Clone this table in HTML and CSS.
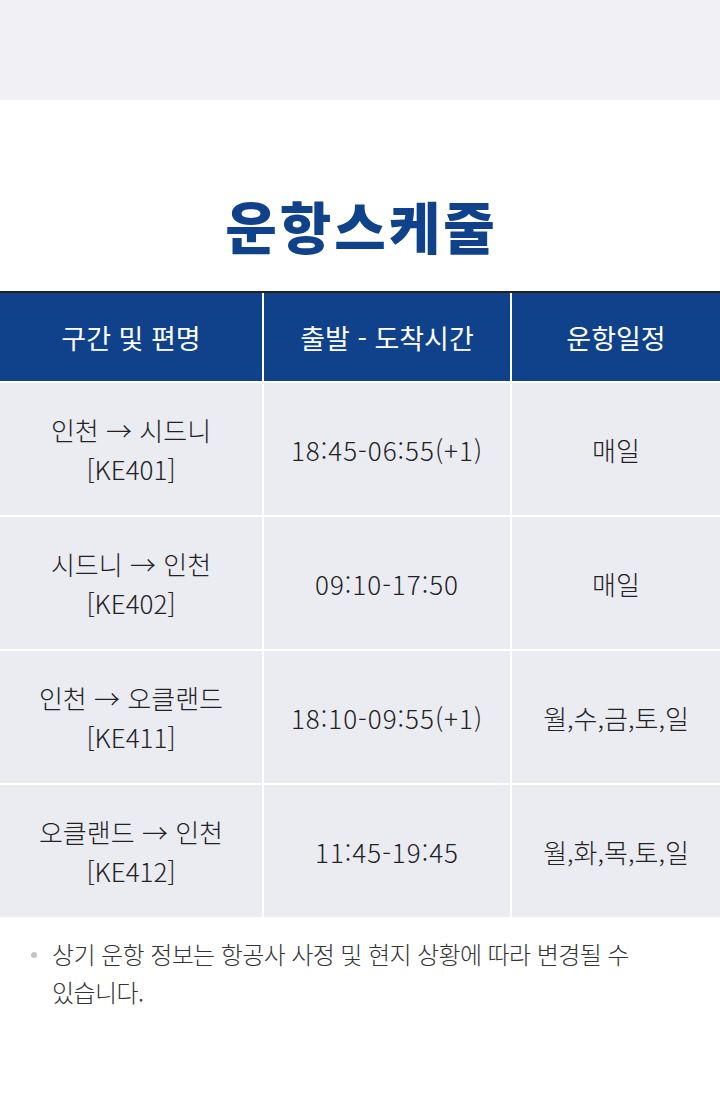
FILE: index.html
```html
<!DOCTYPE html>
<html lang="ko">
<head>
<meta charset="utf-8">
<link rel="stylesheet" href="styles.css">
</head>
<body>
<div class="top-band"></div>
<h1 class="title">운항스케줄</h1>
<div class="schedule">
  <div class="row head">
    <div class="cell">구간 및 편명</div>
    <div class="cell">출발 - 도착시간</div>
    <div class="cell">운항일정</div>
  </div>
  <div class="row">
    <div class="cell">인천 → 시드니<br>[KE401]</div>
    <div class="cell time">18:45-06:55(+1)</div>
    <div class="cell">매일</div>
  </div>
  <div class="row">
    <div class="cell">시드니 → 인천<br>[KE402]</div>
    <div class="cell time">09:10-17:50</div>
    <div class="cell">매일</div>
  </div>
  <div class="row">
    <div class="cell">인천 → 오클랜드<br>[KE411]</div>
    <div class="cell time">18:10-09:55(+1)</div>
    <div class="cell">월,수,금,토,일</div>
  </div>
  <div class="row">
    <div class="cell">오클랜드 → 인천<br>[KE412]</div>
    <div class="cell time">11:45-19:45</div>
    <div class="cell">월,화,목,토,일</div>
  </div>
</div>
<ul class="notes">
  <li>상기 운항 정보는 항공사 사정 및 현지 상황에 따라 변경될 수 있습니다.</li>
</ul>
</body>
</html>
```
FILE: styles.css
```css
* { box-sizing: border-box; }
html, body { margin: 0; padding: 0; background: #fff; }
body {
  width: 720px;
  font-family: "Noto Sans CJK KR", "Noto Sans", sans-serif;
  color: #222;
}
.top-band { height: 100px; background: #f0f0f5; }
.title {
  margin: 0;
  padding-top: 87px;
  height: 191px;
  text-align: center;
  font-size: 56px;
  font-weight: 900;
  line-height: 76px;
  color: #10428c;
  letter-spacing: 3px;
  text-indent: 3px;
}
.schedule {
  border-top: 2px solid #222;
  display: flex;
  flex-direction: column;
  gap: 2px;
  background: #fff;
}
.row {
  display: grid;
  grid-template-columns: 262px 246px 208px;
  column-gap: 2px;
  height: 132px;
}
.row.head { height: 88px; }
.cell {
  background: #ebebf2;
  display: flex;
  align-items: center;
  justify-content: center;
  text-align: center;
  font-size: 26px;
  font-weight: 300;
  line-height: 39px;
  color: #222;
}
.cell.time { letter-spacing: 1px; }
.head .cell {
  background: #10428b;
  color: #fff;
  font-weight: 400;
  font-size: 27px;
}
.notes {
  list-style: none;
  margin: 0;
  padding: 18px 70px 0 52px;
}
.notes li {
  position: relative;
  font-size: 24px;
  font-weight: 300;
  line-height: 38px;
  color: #333;
  letter-spacing: -0.6px;
}
.notes li::before {
  content: "";
  position: absolute;
  left: -21px;
  top: 17px;
  width: 6px;
  height: 6px;
  border-radius: 50%;
  background: #c4c4c8;
}
```
